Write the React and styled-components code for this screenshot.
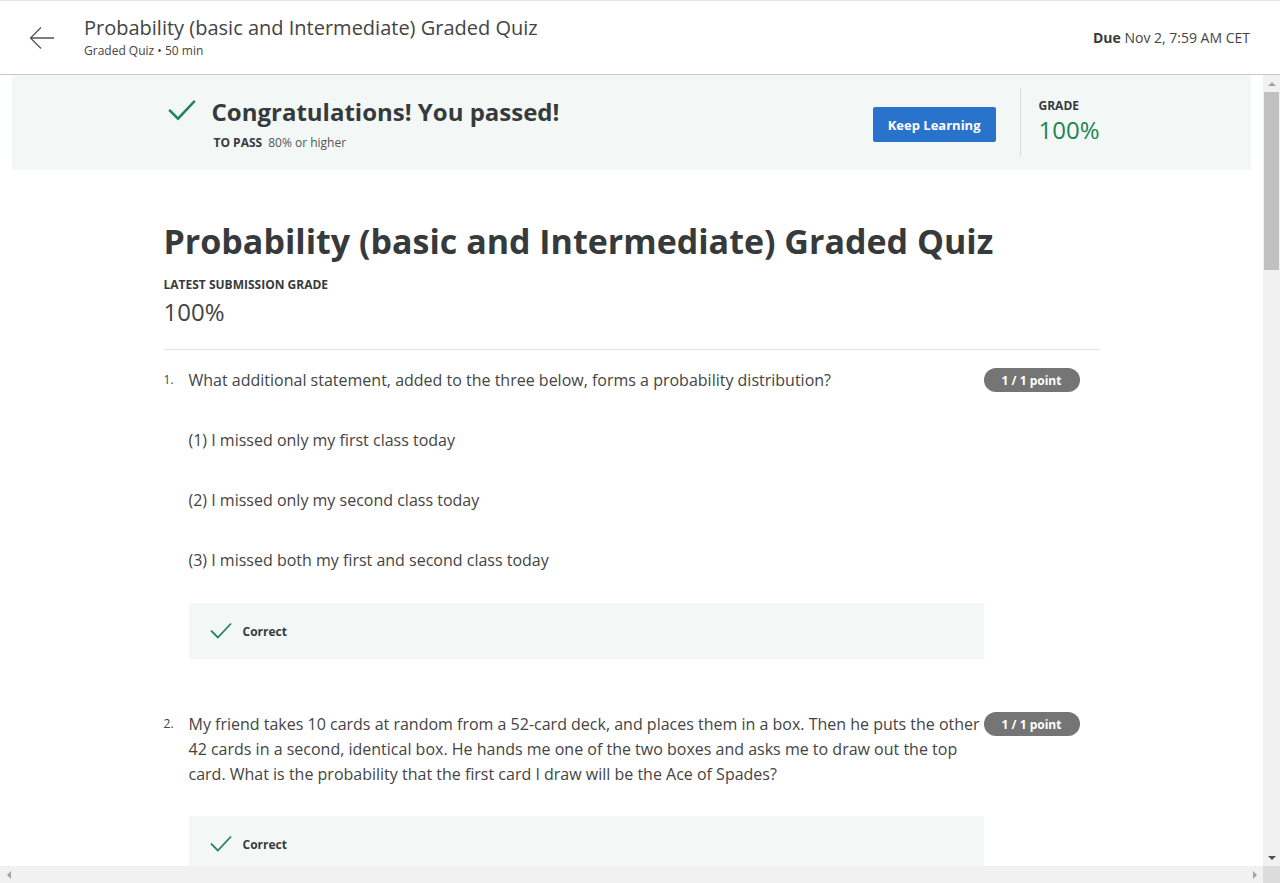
import React from 'react';
import styled, { createGlobalStyle } from 'styled-components';

const GlobalStyle = createGlobalStyle`
  html, body {
    margin: 0;
    padding: 0;
    overflow: hidden;
    background: #ffffff;
    font-family: 'Open Sans', 'Liberation Sans', sans-serif;
    color: #373a3c;
  }
  * { box-sizing: border-box; }
`;

const Page = styled.div`
  width: 1280px;
  height: 883px;
  display: flex;
  flex-direction: column;
`;

const Header = styled.header`
  height: 75px;
  flex-shrink: 0;
  border-top: 1px solid #e3e3e3;
  border-bottom: 1px solid #c9c9c9;
  display: flex;
  align-items: center;
  padding: 0 30px 0 28px;
`;

const BackButton = styled.button`
  border: none;
  background: none;
  padding: 0;
  width: 28px;
  height: 28px;
  margin-right: 28px;
  display: flex;
  align-items: center;
  justify-content: center;
  cursor: pointer;
`;

const HeaderTitles = styled.div`
  flex: 1;
  display: flex;
  flex-direction: column;
  margin-top: -2px;
`;

const HeaderTitle = styled.div`
  font-size: 20px;
  line-height: 26px;
  color: #444444;
`;

const HeaderSub = styled.div`
  font-size: 12px;
  line-height: 16px;
  color: #444444;
  margin-top: 2px;
`;

const Due = styled.div`
  font-size: 14px;
  color: #444444;
  b { font-weight: 700; color: #373a3c; }
`;

const Viewport = styled.div`
  flex: 1;
  display: flex;
  flex-direction: column;
  min-height: 0;
`;

const ViewRow = styled.div`
  flex: 1;
  display: flex;
  min-height: 0;
`;

const Content = styled.main`
  flex: 1;
  overflow: hidden;
  padding: 0 12px;
`;

const Banner = styled.section`
  background: #f3f8f6;
  height: 95px;
`;

const BannerInner = styled.div`
  width: 936px;
  height: 100%;
  margin: 0 auto;
  display: flex;
  align-items: center;
`;

const PassBlock = styled.div`
  flex: 1;
  display: flex;
  align-items: flex-start;
  padding-left: 4px;
  margin-top: 2px;
`;

const PassIcon = styled.div`
  width: 28px;
  margin-right: 16px;
  margin-top: 3px;
`;

const PassTitle = styled.h2`
  margin: 0;
  font-size: 24px;
  line-height: 32px;
  font-weight: 700;
  color: #373a3c;
`;

const PassRule = styled.div`
  font-size: 12px;
  line-height: 18px;
  margin-top: 6px;
  padding-left: 2px;
  color: #555;
  b { font-weight: 700; color: #373a3c; margin-right: 6px; }
`;

const KeepButton = styled.button`
  background: #2a73cc;
  color: #ffffff;
  border: none;
  border-radius: 2px;
  font-family: inherit;
  font-weight: 700;
  font-size: 13px;
  height: 35px;
  padding: 0 15px;
  margin-right: 24px;
  margin-top: 4px;
  cursor: pointer;
`;

const GradeBlock = styled.div`
  border-left: 1px solid #d9dedc;
  height: 68px;
  padding: 12px 0 0 18px;
  width: 80px;
  margin-top: -2px;
`;

const SmallLabel = styled.div`
  font-size: 12px;
  font-weight: 700;
  line-height: ${(p) => p.$lh || 16}px;
  color: #373a3c;
  text-transform: uppercase;
`;

const GradeValue = styled.div`
  font-size: 24px;
  line-height: 32px;
  margin-top: 2px;
  color: #1f8354;
`;

const Main = styled.div`
  width: 936px;
  margin: 0 auto;
  padding-top: 48px;
`;

const QuizTitle = styled.h1`
  margin: 0;
  font-size: 34px;
  line-height: 46px;
  font-weight: 700;
  color: #373a3c;
`;

const SubmissionGrade = styled.div`
  margin-top: 13px;
`;

const SubmissionValue = styled.div`
  font-size: 24px;
  line-height: 32px;
  color: #444444;
  font-weight: 400;
  margin-top: 3px;
`;

const Divider = styled.hr`
  border: none;
  border-top: 1px solid #e1e1e1;
  margin: 21px 0 0;
`;

const Question = styled.div`
  display: flex;
  padding-top: ${(p) => p.$top}px;
`;

const QNumber = styled.div`
  width: 25px;
  flex-shrink: 0;
  font-size: 12px;
  line-height: 24px;
  color: #444;
`;

const QBody = styled.div`
  width: 795px;
  flex-shrink: 0;
`;

const QText = styled.p`
  margin: 0;
  font-size: 16px;
  line-height: 25px;
  color: #444444;
`;

const Option = styled.p`
  margin: 35px 0 0;
  font-size: 16px;
  line-height: 25px;
  color: #444444;
`;

const Feedback = styled.div`
  background: #f3f8f6;
  height: 56px;
  margin-top: ${(p) => p.$top}px;
  display: flex;
  align-items: center;
  padding-left: 21px;
  font-size: 12px;
  font-weight: 700;
  color: #373a3c;
  gap: 11px;
`;

const PointBadge = styled.div`
  width: 96px;
  height: 24px;
  border-radius: 12px;
  background: #757575;
  color: #ffffff;
  font-size: 12px;
  font-weight: 700;
  display: flex;
  align-items: center;
  justify-content: center;
`;

const VScroll = styled.div`
  width: 17px;
  background: #f1f1f1;
  display: flex;
  flex-direction: column;
  align-items: center;
`;

const ScrollArrow = styled.div`
  width: 17px;
  height: 17px;
  display: flex;
  align-items: center;
  justify-content: center;
`;

const VThumb = styled.div`
  width: 15px;
  height: 178px;
  background: #c1c1c1;
`;

const Spacer = styled.div`
  flex: 1;
`;

const HScroll = styled.div`
  height: 17px;
  display: flex;
  background: #f1f1f1;
`;

const HTrack = styled.div`
  flex: 1;
  display: flex;
  align-items: center;
  justify-content: space-between;
`;

const Corner = styled.div`
  width: 17px;
  background: #dcdcdc;
`;

const Check = ({ size = 28, stroke = 2.4 }) => (
  <svg width={size} height={size * 0.8} viewBox="0 0 28 22" fill="none">
    <path d="M2 11.5 L10 19.5 L26 2.5" stroke="#1f8354" strokeWidth={stroke} strokeLinecap="square" />
  </svg>
);

const Tri = ({ dir, color = '#a3a3a3' }) => {
  const pts = {
    up: '0,4 4,0 8,4',
    down: '0,0 8,0 4,4',
    left: '4,0 4,8 0,4',
    right: '0,0 0,8 4,4',
  }[dir];
  const vertical = dir === 'up' || dir === 'down';
  return (
    <svg width={vertical ? 8 : 4} height={vertical ? 4 : 8}>
      <polygon points={pts} fill={color} />
    </svg>
  );
};

const questions = [
  {
    text: 'What additional statement, added to the three below, forms a probability distribution?',
    options: [
      '(1) I missed only my first class today',
      '(2) I missed only my second class today',
      '(3) I missed both my first and second class today',
    ],
  },
  {
    text: 'My friend takes 10 cards at random from a 52-card deck, and places them in a box. Then he puts the other 42 cards in a second, identical box. He hands me one of the two boxes and asks me to draw out the top card. What is the probability that the first card I draw will be the Ace of Spades?',
    options: [],
  },
];

export default function App() {
  return (
    <Page>
      <GlobalStyle />
      <Header>
        <BackButton aria-label="Back">
          <svg width="26" height="24" viewBox="0 0 26 24" fill="none">
            <path d="M25 12 H2 M12 1.5 L1.5 12 L12 22.5" stroke="#555" strokeWidth="1.3" />
          </svg>
        </BackButton>
        <HeaderTitles>
          <HeaderTitle>Probability (basic and Intermediate) Graded Quiz</HeaderTitle>
          <HeaderSub>Graded Quiz • 50 min</HeaderSub>
        </HeaderTitles>
        <Due><b>Due</b> Nov 2, 7:59 AM CET</Due>
      </Header>
      <Viewport>
        <ViewRow>
          <Content>
            <Banner>
              <BannerInner>
                <PassBlock>
                  <PassIcon><Check /></PassIcon>
                  <div>
                    <PassTitle>Congratulations! You passed!</PassTitle>
                    <PassRule><b>TO PASS</b>80% or higher</PassRule>
                  </div>
                </PassBlock>
                <KeepButton>Keep Learning</KeepButton>
                <GradeBlock>
                  <SmallLabel $lh={12}>Grade</SmallLabel>
                  <GradeValue>100%</GradeValue>
                </GradeBlock>
              </BannerInner>
            </Banner>
            <Main>
              <QuizTitle>Probability (basic and Intermediate) Graded Quiz</QuizTitle>
              <SubmissionGrade>
                <SmallLabel>Latest Submission Grade</SmallLabel>
                <SubmissionValue>100%</SubmissionValue>
              </SubmissionGrade>
              <Divider />
              {questions.map((q, i) => (
                <Question key={i} $top={i === 0 ? 18 : 53}>
                  <QNumber>{i + 1}.</QNumber>
                  <QBody>
                    <QText>{q.text}</QText>
                    {q.options.map((o) => (
                      <Option key={o}>{o}</Option>
                    ))}
                    <Feedback $top={q.options.length ? 30 : 29}>
                      <Check size={22} stroke={2.2} />
                      Correct
                    </Feedback>
                  </QBody>
                  <PointBadge>1 / 1 point</PointBadge>
                </Question>
              ))}
            </Main>
          </Content>
          <VScroll>
            <ScrollArrow><Tri dir="up" /></ScrollArrow>
            <VThumb />
            <Spacer />
            <ScrollArrow><Tri dir="down" color="#505050" /></ScrollArrow>
          </VScroll>
        </ViewRow>
        <HScroll>
          <HTrack>
            <ScrollArrow><Tri dir="left" /></ScrollArrow>
            <ScrollArrow><Tri dir="right" /></ScrollArrow>
          </HTrack>
          <Corner />
        </HScroll>
      </Viewport>
    </Page>
  );
}
